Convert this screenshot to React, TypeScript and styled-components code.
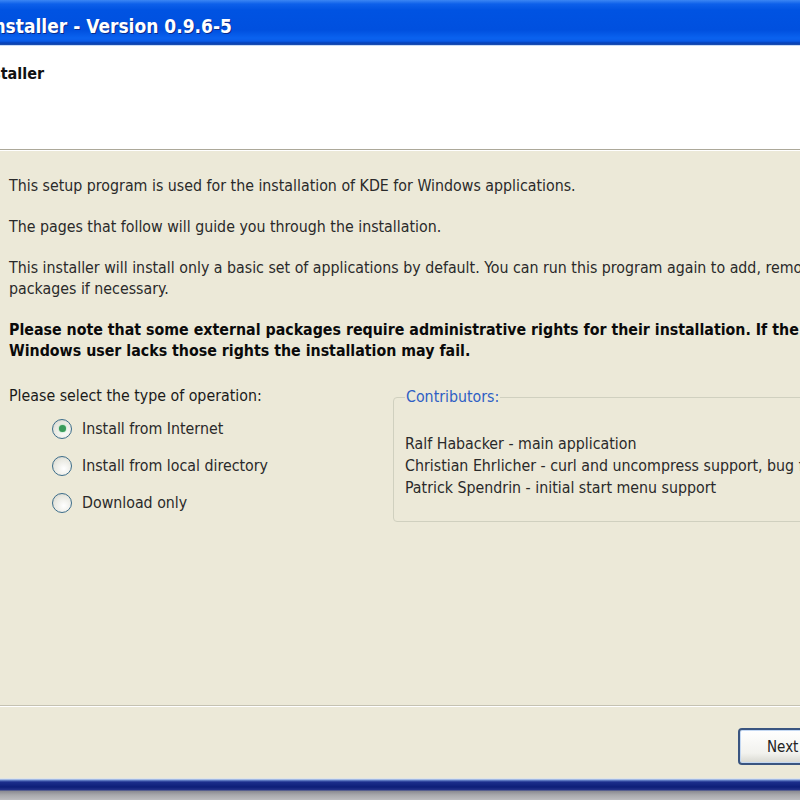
import styled, { createGlobalStyle } from "styled-components";

const GlobalStyle = createGlobalStyle`
  html, body {
    margin: 0;
    padding: 0;
    overflow: hidden;
    background: #ece9d8;
  }
`;

const uiFont = `"DejaVu Sans Condensed", "DejaVu Sans", Tahoma, sans-serif`;

const Window = styled.div`
  width: 800px;
  height: 800px;
  display: flex;
  flex-direction: column;
  overflow: hidden;
  font-family: ${uiFont};
  color: #1a1a1a;
`;

const TitleBar = styled.div`
  height: 45px;
  flex-shrink: 0;
  display: flex;
  align-items: center;
  background: linear-gradient(
    to bottom,
    #3b86f4 0px,
    #0d60ea 4px,
    #0053e2 10px,
    #0050df 30px,
    #0a62ef 38px,
    #0a5ce9 41px,
    #0540b8 43px,
    #1e4fb0 45px
  );
  border-bottom: 1px solid #c8dcf8;
`;

const TitleText = styled.div`
  width: 232px;
  flex-shrink: 0;
  display: flex;
  justify-content: flex-end;
  white-space: nowrap;
  color: #ffffff;
  font-weight: bold;
  font-size: 19px;
  padding-top: 6px;
  text-shadow: 1px 1px 0 #0a2a8a;
`;

const Header = styled.div`
  height: 104px;
  flex-shrink: 0;
  background: #ffffff;
  padding-top: 18px;
  box-sizing: border-box;
  border-bottom: 1px solid #aca899;
  box-shadow: 0 1px 0 #ffffff;
`;

const HeaderTitle = styled.div`
  width: 44px;
  display: flex;
  justify-content: flex-end;
  white-space: nowrap;
  font-weight: bold;
  font-size: 16px;
  color: #111;
`;

const Body = styled.div`
  flex: 1;
  padding: 25px 0 0 9px;
  font-size: 15.8px;
  line-height: 21px;
  white-space: nowrap;
`;

const Para = styled.p<{ $bold?: boolean }>`
  margin: 0 0 20px;
  font-weight: ${(p) => (p.$bold ? "bold" : "normal")};
  color: ${(p) => (p.$bold ? "#0a0a0a" : "#2a2a2a")};
`;

const OptionsRow = styled.div`
  display: flex;
  margin-top: 24px;
`;

const OperationColumn = styled.div`
  width: 384px;
  flex-shrink: 0;
`;

const RadioList = styled.div`
  display: flex;
  flex-direction: column;
  gap: 16px;
  padding: 12px 0 0 43px;
`;

const RadioRow = styled.label`
  display: flex;
  align-items: center;
  gap: 10px;
  color: #2a2a2a;
`;

const RadioCircle = styled.span<{ $checked?: boolean }>`
  width: 20px;
  height: 20px;
  border-radius: 50%;
  box-sizing: border-box;
  border: 1.5px solid #3c6d8a;
  background: radial-gradient(circle at 60% 65%, #ffffff 0%, #e8e8e0 60%, #c8c8c0 100%);
  display: flex;
  align-items: center;
  justify-content: center;
  &::after {
    content: "";
    width: 7px;
    height: 7px;
    border-radius: 50%;
    background: ${(p) => (p.$checked ? "#3a9a5a" : "transparent")};
    box-shadow: ${(p) => (p.$checked ? "0 0 2px #6ad08a" : "none")};
  }
`;

const GroupBox = styled.fieldset`
  margin: 3px 0 0;
  width: 440px;
  height: 134px;
  box-sizing: border-box;
  border: 1px solid #d0d0bf;
  border-radius: 4px;
  padding: 27px 0 0 11px;
  flex-shrink: 0;
`;

const GroupLegend = styled.legend`
  color: #2f5fc4;
  padding: 0 1px;
  margin-left: 0;
  line-height: 18px;
`;

const ContributorLine = styled.div`
  color: #2a2a2a;
  line-height: 22px;
`;

const Footer = styled.div`
  height: 73px;
  flex-shrink: 0;
  border-top: 1px solid #c5c2b2;
  box-shadow: inset 0 1px 0 #ffffff;
  display: flex;
  justify-content: flex-end;
  align-items: center;
  padding-top: 8px;
  box-sizing: border-box;
`;

const NextButton = styled.button`
  width: 90px;
  height: 37px;
  margin-right: -28px;
  border: 2px solid #3a5580;
  border-radius: 4px;
  background: linear-gradient(to bottom, #ffffff 0%, #f2f2ee 70%, #d8d8d0 100%);
  box-shadow: inset 0 0 0 1px #c4d8f2;
  font-family: ${uiFont};
  font-size: 15px;
  color: #222;
  text-align: left;
  padding: 2px 0 0 27px;
`;

const BottomFrame = styled.div`
  height: 22px;
  flex-shrink: 0;
  background: linear-gradient(
    to bottom,
    #ece9d8 0px,
    #d2e0f6 1px,
    #6f8ed0 2px,
    #1c2f8c 4px,
    #0d1f78 9px,
    #25348a 12px,
    #8a8a92 13px,
    #a8a8ac 17px,
    #bdbdc0 22px
  );
`;

const contributors = [
  "Ralf Habacker - main application",
  "Christian Ehrlicher - curl and uncompress support, bug fixes",
  "Patrick Spendrin - initial start menu support",
];

const operations = [
  { label: "Install from Internet", checked: true },
  { label: "Install from local directory", checked: false },
  { label: "Download only", checked: false },
];

export default function App() {
  return (
    <>
      <GlobalStyle />
      <Window>
        <TitleBar>
          <TitleText>KDE-Installer - Version 0.9.6-5</TitleText>
        </TitleBar>
        <Header>
          <HeaderTitle>KDE-Installer</HeaderTitle>
        </Header>
        <Body>
          <Para>This setup program is used for the installation of KDE for Windows applications.</Para>
          <Para>The pages that follow will guide you through the installation.</Para>
          <Para>
            This installer will install only a basic set of applications by default. You can run this program again to add, remove or update
            <br />
            packages if necessary.
          </Para>
          <Para $bold>
            Please note that some external packages require administrative rights for their installation. If the
            <br />
            Windows user lacks those rights the installation may fail.
          </Para>
          <OptionsRow>
            <OperationColumn>
              <div>Please select the type of operation:</div>
              <RadioList>
                {operations.map((op) => (
                  <RadioRow key={op.label}>
                    <RadioCircle $checked={op.checked} />
                    {op.label}
                  </RadioRow>
                ))}
              </RadioList>
            </OperationColumn>
            <GroupBox>
              <GroupLegend>Contributors:</GroupLegend>
              {contributors.map((c) => (
                <ContributorLine key={c}>{c}</ContributorLine>
              ))}
            </GroupBox>
          </OptionsRow>
        </Body>
        <Footer>
          <NextButton>Next</NextButton>
        </Footer>
        <BottomFrame />
      </Window>
    </>
  );
}
